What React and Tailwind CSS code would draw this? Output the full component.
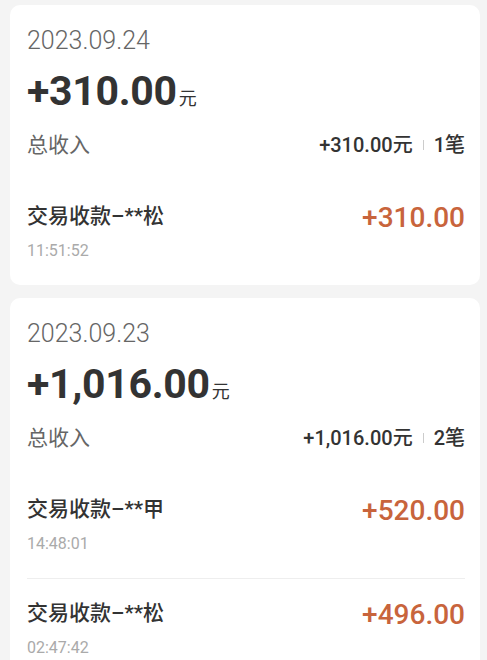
import React from "react";

// Daily income records
const days = [
  {
    date: "2023.09.24",
    total: "+310.00",
    count: 1,
    items: [{ name: "交易收款–**松", time: "11:51:52", amount: "+310.00" }],
  },
  {
    date: "2023.09.23",
    total: "+1,016.00",
    count: 2,
    items: [
      { name: "交易收款–**甲", time: "14:48:01", amount: "+520.00" },
      { name: "交易收款–**松", time: "02:47:42", amount: "+496.00" },
    ],
  },
];

function DayCard({ day }) {
  return (
    <div className="bg-white rounded-[10px] pl-[17px] pr-[15px] pt-5">
      {/* Summary */}
      <div className="text-[25px] leading-[32px] font-light text-[#666]">{day.date}</div>
      <div className="mt-[10px] flex items-baseline leading-[48px] text-[#333]">
        <span className="text-[41px] font-bold tracking-[-0.3px]">{day.total}</span>
        <span className="text-[18px] ml-[2px]">元</span>
      </div>
      <div className="mt-[8px] flex items-center justify-between leading-[28px]">
        <span className="text-[21px] text-[#666]">总收入</span>
        <div className="flex items-center text-[20px] font-medium text-[#333]">
          <span>{day.total}元</span>
          <span className="mx-[10px] h-[10px] w-px bg-[#ccc]" />
          <span>{day.count}笔</span>
        </div>
      </div>

      {/* Transactions */}
      <div className="mt-[22px]">
        {day.items.map((it, i) => (
          <div
            key={i}
            className={
              "flex items-start justify-between pb-[24px] " +
              (i === 0 ? "pt-[21px]" : "pt-[20px] border-t border-[#eeeeee]")
            }
          >
            <div>
              <div className="text-[21px] leading-[28px] font-medium text-[#333]">{it.name}</div>
              <div className="mt-[11px] text-[16px] leading-[20px] text-[#aaa]">{it.time}</div>
            </div>
            <div className="text-[28px] leading-[28px] font-medium text-[#c8643c] mt-[2px]">{it.amount}</div>
          </div>
        ))}
      </div>
    </div>
  );
}

export default function App() {
  return (
    <div className="min-h-screen bg-[#f4f4f4] pt-[5px] pl-[10px] pr-[7px] pb-4 font-['Roboto','Noto_Sans_CJK_SC',sans-serif]">
      <div className="flex flex-col gap-[13px]">
        {days.map((d) => (
          <DayCard key={d.date} day={d} />
        ))}
      </div>
    </div>
  );
}
